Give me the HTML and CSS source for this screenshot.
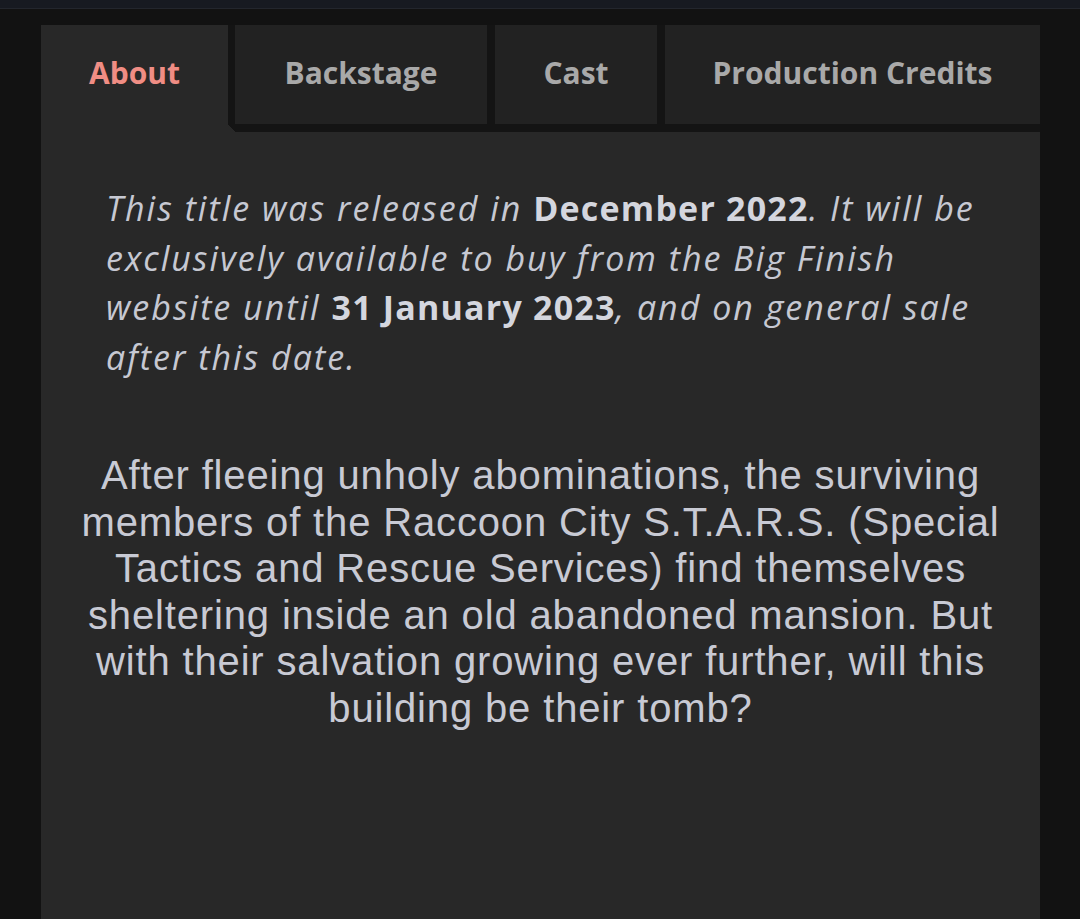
FILE: index.html
```html
<!DOCTYPE html>
<html lang="en">
<head>
<meta charset="utf-8">
<title>About</title>
<link rel="stylesheet" href="styles.css">
</head>
<body>
<div class="topbar"></div>
<div class="page">
  <div class="card">
    <nav class="tabs">
      <div class="tab active">About</div>
      <div class="tab-group">
        <div class="tab tab-backstage">Backstage</div>
        <div class="tab tab-cast">Cast</div>
        <div class="tab tab-credits">Production Credits</div>
      </div>
    </nav>
    <div class="panel">
      <p class="release">This title was released in <b>December 2022</b>. It will be exclusively available to buy from the Big Finish website until <b>31 January 2023</b>, and on general sale after this date.</p>
      <p class="synopsis">After fleeing unholy abominations, the surviving members of the Raccoon City S.T.A.R.S. (Special Tactics and Rescue Services) find themselves sheltering inside an old abandoned mansion. But with their salvation growing ever further, will this building be their tomb?</p>
    </div>
  </div>
</div>
</body>
</html>
```
FILE: styles.css
```css
html, body {
  margin: 0;
  padding: 0;
  background: #121212;
  height: 100%;
  overflow: hidden;
}
.topbar {
  height: 8px;
  background: #171a21;
  border-bottom: 1px solid #23262d;
}
.page {
  padding: 16px 40px 0 41px;
}
.card {
  width: 999px;
  background: #282828;
  min-height: 900px;
}
.tabs {
  display: flex;
  height: 107px;
  background: #121212;
}
.tab {
  display: flex;
  align-items: center;
  justify-content: center;
  font-family: "Open Sans", sans-serif;
  font-weight: 700;
  font-size: 30px;
  color: #a9a9a9;
  background: #222222;
  height: 99px;
  box-sizing: border-box;
  padding-bottom: 4px;
}
.tab.active {
  width: 187px;
  height: 107px;
  background: #282828;
  color: #f08d84;
  padding-bottom: 12px;
}
.tab-group {
  flex: 1;
  display: flex;
  gap: 8px;
  padding: 0 0 8px 7px;
  background:
    linear-gradient(to top right, #282828 50%, transparent 50%) left bottom / 7px 8px no-repeat,
    #141414;
}
.tab-backstage { width: 252px; }
.tab-cast { width: 162px; }
.tab-credits { flex: 1; }
.panel {
  padding: 52px 30px 0 30px;
}
.release {
  margin: 0 22px 0 35px;
  font-family: "Open Sans", sans-serif;
  font-style: italic;
  font-size: 34px;
  letter-spacing: 2px;
  line-height: 49.5px;
  color: #c6c8d2;
}
.release b {
  font-style: normal;
  font-weight: 700;
  letter-spacing: 1.2px;
  color: #d4d6de;
}
.synopsis {
  margin: 70px -12px 0 -12px;
  font-family: "Liberation Sans", Arial, sans-serif;
  font-size: 40px;
  letter-spacing: 0.85px;
  line-height: 46.6px;
  text-align: center;
  color: #c8cad4;
}
```
